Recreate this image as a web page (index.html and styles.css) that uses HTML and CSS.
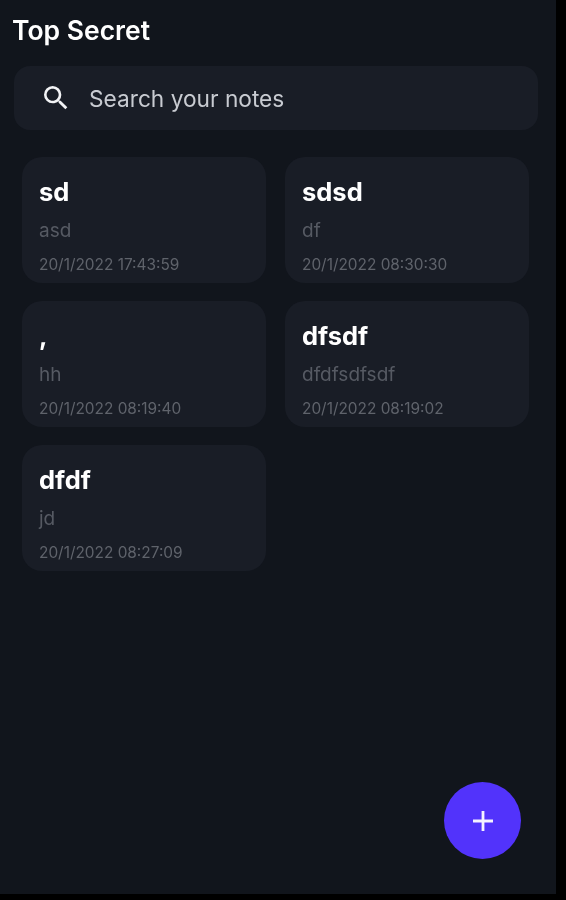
FILE: index.html
```html
<!DOCTYPE html>
<html lang="en">
<head>
  <meta charset="UTF-8">
  <meta name="viewport" content="width=device-width, initial-scale=1">
  <title>Top Secret</title>
  <link rel="stylesheet" href="styles.css">
</head>
<body>
  <div class="screen">
    <h1 class="app-title">Top Secret</h1>

    <div class="search">
      <svg class="search-icon" viewBox="0 0 24 24" width="32" height="32" aria-hidden="true">
        <path d="M15.5 14h-.79l-.28-.27A6.47 6.47 0 0 0 16 9.5 6.5 6.5 0 1 0 9.5 16c1.61 0 3.09-.59 4.23-1.57l.27.28v.79l5 4.99L20.49 19l-4.99-5zm-6 0C7.01 14 5 11.99 5 9.5S7.01 5 9.5 5 14 7.01 14 9.5 11.99 14 9.5 14z"/>
      </svg>
      <span class="search-text">Search your notes</span>
    </div>

    <div class="notes">
      <div class="note">
        <div class="note-title">sd</div>
        <div class="note-body">asd</div>
        <div class="note-date">20/1/2022 17:43:59</div>
      </div>
      <div class="note">
        <div class="note-title">sdsd</div>
        <div class="note-body">df</div>
        <div class="note-date">20/1/2022 08:30:30</div>
      </div>
      <div class="note">
        <div class="note-title">,</div>
        <div class="note-body">hh</div>
        <div class="note-date">20/1/2022 08:19:40</div>
      </div>
      <div class="note">
        <div class="note-title">dfsdf</div>
        <div class="note-body">dfdfsdfsdf</div>
        <div class="note-date">20/1/2022 08:19:02</div>
      </div>
      <div class="note">
        <div class="note-title">dfdf</div>
        <div class="note-body">jd</div>
        <div class="note-date">20/1/2022 08:27:09</div>
      </div>
    </div>

    <button class="fab" aria-label="Add note">
      <svg viewBox="0 0 24 24" width="24" height="24" aria-hidden="true">
        <path d="M12 2v20M2 12h20"/>
      </svg>
    </button>
  </div>
</body>
</html>
```

FILE: styles.css
```css
html, body {
  margin: 0;
  height: 100%;
  background-color: #000;
  overflow: hidden;
}
.screen {
  position: relative;
  box-sizing: border-box;
  width: 556px;
  height: 894px;
  padding: 13px 18px 0 12px;
  background-color: #11151c;
  font-family: Inter, "Noto Sans", sans-serif;
  filter: blur(0.6px);
}
.app-title {
  margin: 0 0 19px;
  font-size: 26.5px;
  line-height: 34px;
  font-weight: 600;
  color: #fff;
}
.search {
  display: flex;
  align-items: center;
  height: 64px;
  margin-left: 2px;
  padding-left: 26px;
  border-radius: 16px;
  background-color: #191d26;
}
.search-icon {
  fill: #f2f3f5;
  flex-shrink: 0;
}
.search-text {
  margin-left: 17px;
  font-size: 22.7px;
  color: #c8cbd1;
}
.notes {
  display: grid;
  grid-template-columns: 244px 244px;
  column-gap: 19px;
  row-gap: 18px;
  margin: 27px 0 0 10px;
}
.note {
  box-sizing: border-box;
  height: 126px;
  padding: 18px 17px 0;
  border-radius: 20px;
  background-color: #191d26;
}
.note-title {
  font-size: 25.5px;
  line-height: 34px;
  font-weight: 700;
  color: #fff;
}
.note-body {
  margin-top: 10px;
  font-size: 19px;
  line-height: 24px;
  color: #565a63;
}
.note-date {
  margin-top: 12px;
  font-size: 15.4px;
  line-height: 20px;
  color: #5f636b;
}
.fab {
  position: absolute;
  left: 444px;
  top: 782px;
  display: flex;
  align-items: center;
  justify-content: center;
  width: 77px;
  height: 77px;
  padding: 0;
  border: none;
  border-radius: 50%;
  background-color: #5233fb;
}
.fab svg {
  fill: none;
  stroke: #f4f2ff;
  stroke-width: 2.8;
}
```
